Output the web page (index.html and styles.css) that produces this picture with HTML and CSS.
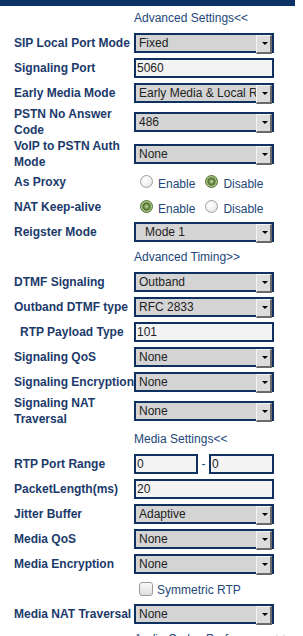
FILE: index.html
```html
<!DOCTYPE html>
<html lang="en">
<head>
    <meta charset="UTF-8">
    <title>SIP Advanced</title>
    <link rel="stylesheet" href="styles.css">
</head>
<body>
<div class="topbar"></div>
<form class="panel">
    <div class="row">
        <span class="label"></span>
        <a class="toggle" href="#">Advanced Settings&lt;&lt;</a>
    </div>
    <div class="row">
        <span class="label">SIP Local Port Mode</span>
        <div class="sel"><select><option>Fixed</option></select></div>
    </div>
    <div class="row">
        <span class="label">Signaling Port</span>
        <input class="txt" type="text" value="5060">
    </div>
    <div class="row">
        <span class="label">Early Media Mode</span>
        <div class="sel"><select><option>Early Media &amp; Local RBT</option></select></div>
    </div>
    <div class="row tall">
        <span class="label">PSTN No Answer<br>Code</span>
        <div class="sel"><select><option>486</option></select></div>
    </div>
    <div class="row tall">
        <span class="label">VoIP to PSTN Auth<br>Mode</span>
        <div class="sel"><select><option>None</option></select></div>
    </div>
    <div class="row">
        <span class="label">As Proxy</span>
        <div class="choice">
            <label><input type="radio" name="proxy"> Enable</label>
            <label><input type="radio" name="proxy" checked> Disable</label>
        </div>
    </div>
    <div class="row">
        <span class="label">NAT Keep-alive</span>
        <div class="choice">
            <label><input type="radio" name="keep" checked> Enable</label>
            <label><input type="radio" name="keep"> Disable</label>
        </div>
    </div>
    <div class="row">
        <span class="label">Reigster Mode</span>
        <div class="sel"><select class="indent"><option>Mode 1</option></select></div>
    </div>
    <div class="row">
        <span class="label"></span>
        <a class="toggle" href="#">Advanced Timing&gt;&gt;</a>
    </div>
    <div class="row">
        <span class="label">DTMF Signaling</span>
        <div class="sel"><select><option>Outband</option></select></div>
    </div>
    <div class="row">
        <span class="label">Outband DTMF type</span>
        <div class="sel"><select><option>RFC 2833</option></select></div>
    </div>
    <div class="row">
        <span class="label sub">RTP Payload Type</span>
        <input class="txt" type="text" value="101">
    </div>
    <div class="row">
        <span class="label">Signaling QoS</span>
        <div class="sel"><select><option>None</option></select></div>
    </div>
    <div class="row">
        <span class="label">Signaling Encryption</span>
        <div class="sel"><select><option>None</option></select></div>
    </div>
    <div class="row tall">
        <span class="label">Signaling NAT<br>Traversal</span>
        <div class="sel"><select><option>None</option></select></div>
    </div>
    <div class="row">
        <span class="label"></span>
        <a class="toggle" href="#">Media Settings&lt;&lt;</a>
    </div>
    <div class="row">
        <span class="label">RTP Port Range</span>
        <div class="range">
            <input class="txt" type="text" value="0">
            <span class="dash">-</span>
            <input class="txt" type="text" value="0">
        </div>
    </div>
    <div class="row">
        <span class="label">PacketLength(ms)</span>
        <input class="txt" type="text" value="20">
    </div>
    <div class="row">
        <span class="label">Jitter Buffer</span>
        <div class="sel"><select><option>Adaptive</option></select></div>
    </div>
    <div class="row">
        <span class="label">Media QoS</span>
        <div class="sel"><select><option>None</option></select></div>
    </div>
    <div class="row">
        <span class="label">Media Encryption</span>
        <div class="sel"><select><option>None</option></select></div>
    </div>
    <div class="row">
        <span class="label"></span>
        <label class="check"><input type="checkbox"> Symmetric RTP</label>
    </div>
    <div class="row">
        <span class="label">Media NAT Traversal</span>
        <div class="sel"><select><option>None</option></select></div>
    </div>
    <div class="row">
        <span class="label"></span>
        <a class="toggle" href="#">Audio Codec Preferences&lt;&lt;</a>
    </div>
</form>
</body>
</html>
```

FILE: styles.css
```css
* {
    box-sizing: border-box;
}

html, body {
    height: 636px;
    overflow: hidden;
}

body {
    margin: 0;
    background: #fff;
    font-family: "Liberation Sans", Arial, sans-serif;
    font-size: 12px;
    color: #222;
}

.topbar {
    width: 295px;
    height: 6px;
    background: #0d3366;
}

.panel {
    padding: 1px 0 0 14px;
}

.row {
    display: flex;
    align-items: center;
    height: 22px;
    margin-bottom: 3px;
}

.row.tall {
    height: 29px;
}

.label {
    width: 120px;
    flex: none;
    font-weight: bold;
    line-height: 16px;
    color: #1b3a6b;
    white-space: nowrap;
}

.label.sub {
    padding-left: 6px;
}

.toggle {
    color: #23477a;
    text-decoration: none;
}

/* select with the old grey drop button */
.sel {
    position: relative;
    width: 140px;
    height: 20px;
}

.sel select {
    appearance: none;
    -webkit-appearance: none;
    width: 100%;
    height: 100%;
    margin: 0;
    border: 2px solid #10305e;
    border-radius: 0;
    background: #d4d4d4;
    padding: 0 16px 0 3px;
    font: 12px "Liberation Sans", Arial, sans-serif;
    color: #222;
    outline: none;
}

.sel select.indent {
    padding-left: 9px;
}

.sel::before {
    content: "";
    position: absolute;
    top: 2px;
    right: 2px;
    width: 13px;
    height: 16px;
    background: #dcdcdc;
    border-top: 1px solid #f4f4f4;
    border-left: 1px solid #f4f4f4;
    border-right: 2px solid #6a6a6a;
    border-bottom: 2px solid #6a6a6a;
    pointer-events: none;
}

.sel::after {
    content: "";
    position: absolute;
    top: 9px;
    right: 6px;
    border-left: 3px solid transparent;
    border-right: 3px solid transparent;
    border-top: 3px solid #000;
    pointer-events: none;
}

.txt {
    width: 140px;
    height: 20px;
    margin: 0;
    border: 2px solid #10305e;
    border-radius: 0;
    background: #f4f4f4;
    padding: 0 1px;
    font: 12px "Liberation Sans", Arial, sans-serif;
    color: #222;
    outline: none;
}

.range {
    display: flex;
    align-items: center;
    width: 140px;
}

.range .txt {
    width: 64px;
}

.range .txt:last-child {
    width: 65px;
}

.dash {
    width: 11px;
    text-align: center;
    color: #23477a;
}

.choice {
    display: flex;
    gap: 10px;
    padding-left: 6px;
    color: #23477a;
}

.choice label {
    display: flex;
    align-items: flex-end;
    gap: 5px;
    line-height: 12px;
}

.choice input {
    appearance: none;
    -webkit-appearance: none;
    width: 13px;
    height: 13px;
    margin: 0 0 2px 0;
    border-radius: 50%;
    border: 1px solid #a0a0a0;
    background: radial-gradient(circle at 40% 35%, #fff 0, #f2f2f2 50%, #d8d8d8 100%);
}

.choice input:checked {
    border-color: #4f6b2e;
    background: radial-gradient(circle, #c8dcb0 0, #7a9a52 2px, #4f6b2e 3.5px, #9dbd7a 4.5px, #b6d196 6px);
}

.check {
    display: flex;
    align-items: flex-end;
    gap: 4px;
    padding-left: 5px;
    line-height: 12px;
    color: #23477a;
}

.check input {
    appearance: none;
    -webkit-appearance: none;
    width: 14px;
    height: 14px;
    margin: 0 0 0 0;
    border: 1px solid #9a9a9a;
    border-radius: 3px;
    background: linear-gradient(#fafafa, #dedede);
}
```
